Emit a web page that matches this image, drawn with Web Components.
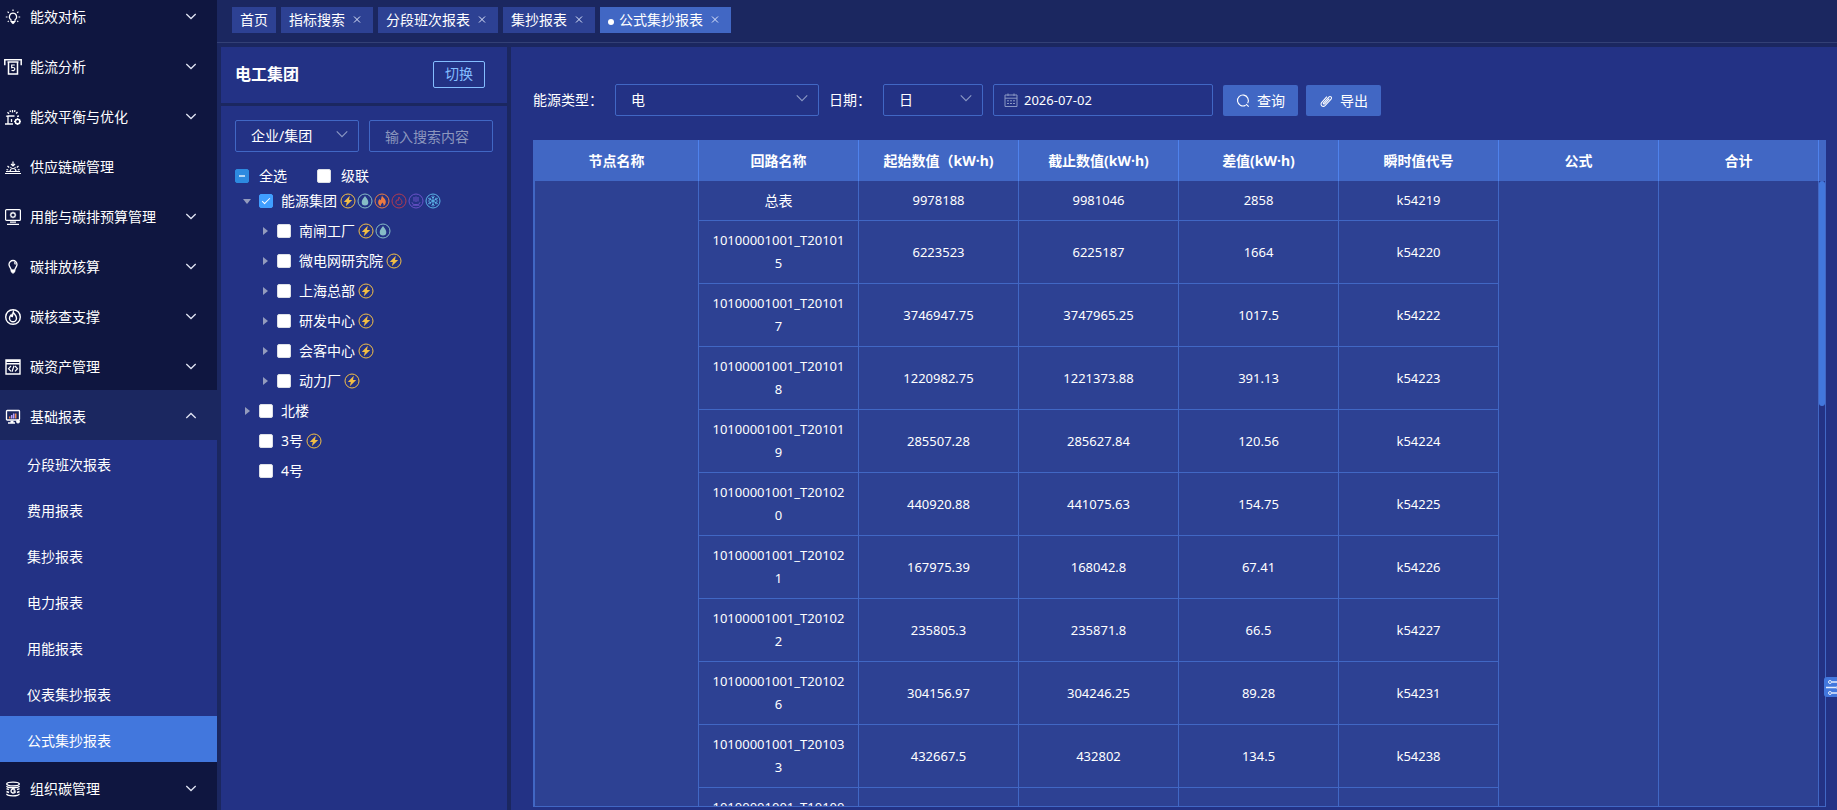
<!DOCTYPE html>
<html lang="zh-CN">
<head>
<meta charset="utf-8">
<title>公式集抄报表</title>
<style>
:root {
  --bg: #1b2760; --nav: #0f1640; --panel: #233285; --cell: #2d4193;
  --head: #4167c4; --active: #4277dd; --line: #4167c4; --headline: #4f82ec;
}
html, body { margin: 0; height: 100%; overflow: hidden; background: var(--bg); color: #fff;
  font: 14px/20px "Noto Sans", "Noto Sans CJK SC", sans-serif; }
</style>
</head>
<body>
<app-shell></app-shell>
<script>
const define = (name, html, setup) => customElements.define(name, class extends HTMLElement {
  connectedCallback() {
    if (this.shadowRoot) return;
    const t = document.createElement('template');
    t.innerHTML = typeof html === 'function' ? html(this) : html;
    this.attachShadow({ mode: 'open' }).append(t.content.cloneNode(true));
    if (setup) setup(this, this.shadowRoot);
  }
});

/* ---------- icons ---------- */
const bolt = '<path d="M9.800 2.800 3.800 8.900h3L5.800 13.200l6.400-6.300H9z" fill="currentColor" stroke="none"/>';
const ring = '<circle cx="8" cy="8" r="7"/>';
const icons = {
  idea: '<path d="M8 4.200a3.600 3.600 0 0 0-2 6.600v1.700h4v-1.700a3.600 3.600 0 0 0-2-6.600zM8 .5v1.500M2.600 2.700l1.200 1.200M13.400 2.700l-1.200 1.200M.8 8h1.700M13.500 8h1.700M2.800 12.800l.9-.9M13.200 12.800l-.9-.9" stroke-width="1.200"/><path d="M6.200 12h3.600v1.700L8 15.300l-1.800-1.600z" fill="currentColor" stroke="none"/>',
  flow: '<path d="M1.500 5.500H.8V.8h16.400v4.700h-.7M3.500 3h11M4.500 3v12h9V3" stroke-width="1.500"/><path d="M10.800 6H7.700v2.700c2.800-.6 3.300.5 3 1.700-.3 1.300-1.900 1.500-3.200.8" stroke-width="1.200"/>',
  balance: '<path d="M0 15h8M3 15V7h6.500M6.500 10v3M1 7l1.700.5M2.500 3.200 4 4.700M7.500 1v2.500M12.500 3l-1.400 1.500M14 7l-2 .3M5 1.500l.5 1.500M10 1.200 9.500 3" stroke-width="1.300"/><circle cx="12.600" cy="12.500" r="2.300" stroke-width="1.600"/><path d="M12.600 8.900v1M12.600 15v1M9 12.500h1M15.200 12.500h1M10 10l.7.7M15.200 10l-.7.7M10 15l.7-.7M15.200 15l-.7-.7"/>',
  supply: '<path d="M0 14.500h16M1 12.500h14M5 12.500a3 3 0 0 1 6 0M8 2.500v4M6 5l2 2 2-2M2.500 7l1.700 1.500M13.500 7l-1.700 1.500M1.500 10.500l1.700.5M14.500 10.500l-1.700.5M5.500 8l.8 1M10.500 8l-.8 1" stroke-width="1.200"/>',
  budget: '<rect x=".6" y=".6" width="14.800" height="10.800" rx="1" stroke-width="1.200"/><circle cx="8" cy="6" r="2.200" stroke-width="1.200"/><path d="M8 2.700v1M8 8.300v1M4.800 6h1M10.200 6h1M5.700 3.700l.7.7M10.300 3.700l-.7.7M5.700 8.300l.7-.7M10.300 8.300l-.7-.7M5 13.200h6M2 15.400h12" stroke-width="1.200"/>',
  bulb: '<path d="M8 1.500a4 4 0 0 0-4 4c0 2 1.800 3.300 2.400 6h3.200C10.200 8.800 12 7.500 12 5.500a4 4 0 0 0-4-4zM9 3.700c1 .2 1.300 1 1.300 1.800" stroke-width="1.300"/><path d="M6.300 11h3.400v2L8 14.300 6.300 13z" fill="currentColor"/>',
  flame: '<circle cx="8" cy="8" r="7.300" stroke-width="1.400"/><path d="M8.300 3c.3 2 3.500 3.300 3.200 6.300a3.500 3.500 0 0 1-7 0c0-1.500.8-2.300 1.600-3.300.2 1 .6 1.400 1.200 1.500C7.800 6 7.700 4.500 8.300 3z" stroke-width="1.400"/>',
  asset: '<path d="M1 1h14v14H1zM1 2.200h14M1 4.800h14" stroke-width="1.400"/><path d="M6 7 3.500 9.700 6 12.400M10 7l2.500 2.700L10 12.400M9 6.800l-2 6" stroke-width="1.200"/>',
  report: '<rect x="1.500" y="1.500" width="13" height="9.500" rx=".8" stroke-width="1.300"/><path d="M3 14h7M5.500 12.500h3" stroke-width="1.500"/><path d="M4.700 9.500v-2M10.700 9.500v-5" stroke="#f58a4b" stroke-width="1.500"/><path d="M6.700 9.500V6M8.700 9.500V4.500" stroke="#b9a4ff" stroke-width="1.500"/><circle cx="13" cy="12.500" r="1.500" fill="currentColor"/>',
  org: '<ellipse cx="8" cy="3" rx="6.300" ry="1.900" stroke-width="1.400"/><path d="M1.700 5c0 2.400 12.600 2.400 12.600 0M1.500 7.700l2.500 1M14.500 7.700l-2.500 1M1.500 10.500l2.500 1M14.500 10.500l-2.500 1M1.700 12.800c0 2.700 12.600 2.700 12.600 0M10 8.500c-1.800-1-4-.3-4 1.600s2.200 2.500 4 1.400V10H8.500" stroke-width="1.400"/>',
  electric: ring + bolt,
  water: ring + '<path d="M8 3c1.800 2.600 3.300 4.200 3.300 6.300a3.300 3.300 0 0 1-6.600 0C4.700 7.200 6.200 5.600 8 3z" fill="currentColor" stroke="none"/>',
  gas: ring + '<path d="M8.200 2.600c.2 2 3.800 3.400 3.600 6.400-.1 2-1 3.200-2.300 4 .5-1.800-.2-2.700-1.200-3.600-.6 1.300-1.800 2-1.500 3.800C5 12.400 4 11 4.200 9c.1-1.300.7-2.300 1.500-3 .2.700.5 1 .9 1.200C7.500 5.800 7.300 4 8.200 2.600z" fill="currentColor" stroke="none"/>',
  heat: ring + '<path d="M8 4c.2 1.700 3.200 2.600 3 5.200-.2 3.500-6 3.500-6.100 0 0-1.300.6-1.900 1.300-2.500l.8 1C7.700 6.600 7.500 5 8 4z"/>',
  steam: ring + '<path d="M4 9.300c0 3.200 8 3.200 8 0M4.500 12.200h7M6 4v4.500M8 3.500V9M10 4v4.500"/>',
  cold: ring + '<path d="M8 2.500v11M3.200 5.200l9.600 5.600M3.200 10.800l9.600-5.600M6.500 3.500 8 5l1.500-1.500M6.500 12.500 8 11l1.500 1.500M3.500 7.300l2-.6-.5-2M12.500 7.300l-2-.6.5-2M3.500 8.700l2 .6-.5 2M12.500 8.700l-2 .6.5 2"/>',
  down: '<path d="m3.300 6 4.700 4.500L12.700 6" stroke-width="1.300"/>',
  up: '<path d="m3.300 10 4.700-4.500 4.700 4.500" stroke-width="1.300"/>',
  arrow: '<path d="m2 5 6 6 6-6" stroke-width="1.300"/>',
  close: '<path d="m5 4.500 6 6M11 4.500l-6 6"/>',
  calendar: '<path d="M2 3h12v11.500H2zM2 6.200h12M5 1.500V4M11 1.500V4M4 8.800h2M7 8.800h2M10 8.800h2M4 11.500h2M7 11.500h2M10 11.500h2"/>',
  search: '<path d="M11 12.800A6.200 6.200 0 1 1 13.300 10.500M11.500 11.500l3 3" stroke-width="1.300"/>',
  clip: '<path d="m11.800 5.200-5.400 6c-.8.9-2-.2-1.200-1.100l6-6.600c1.700-1.700 4.200.5 2.600 2.300l-6.600 7.200c-2.900 2.800-6.600-.4-4-3.400L9 3" stroke-width="1.200"/>',
  sliders: '<path d="M6 4h13M0 9.500h10M14 9.500h5M6 15h13" stroke-width="1.500"/><circle cx="4" cy="4" r="1.500"/><circle cx="12" cy="9.500" r="1.500"/><circle cx="4" cy="15" r="1.500"/>'
};
define('ui-icon', el => {
  const n = el.getAttribute('name');
  const box = n === 'flow' ? '0 0 18 16' : n === 'sliders' ? '0 0 19 19' : '0 0 16 16';
  return `<style>:host{display:block;flex:none;width:16px;height:16px}svg{display:block;width:100%;height:100%;fill:none;stroke:currentColor}</style>
  <svg viewBox="${box}" aria-hidden="true">${icons[n]}</svg>`;
});

/* ---------- side navigation ---------- */
define('nav-item', el => `<style>
  :host{display:block}
  a{display:flex;align-items:center;box-sizing:border-box;height:50px;padding:3px 18px 0 4px;color:#fff;text-decoration:none;background:var(--nav)}
  :host([open]) a{background:var(--bg)}
  .i{width:18px;display:flex;justify-content:center;margin-right:8px}
  .t{flex:1}
  .c{margin-bottom:1px;color:#dfe3f2}
</style><a href="#"><span class="i"><ui-icon name="${el.getAttribute('icon')}"${el.getAttribute('icon') === 'flow' ? ' style="width:18px"' : ''}></ui-icon></span><span class="t"><slot></slot></span>
${el.hasAttribute('leaf') ? '' : `<ui-icon class="c" name="${el.hasAttribute('open') ? 'up' : 'down'}"></ui-icon>`}</a>`);
define('nav-sub', `<style>
  :host{display:block}
  a{display:flex;align-items:center;box-sizing:border-box;height:46px;padding:4px 0 0 27px;color:#fff;text-decoration:none;background:var(--panel)}
  :host([current]) a{background:var(--active)}
</style><a href="#"><slot></slot></a>`);
define('side-nav', `<style>
  :host{display:block;overflow:hidden;background:var(--nav)}
  nav{margin-top:-10px}
</style><nav>
<nav-item icon="idea">能效对标</nav-item><nav-item icon="flow">能流分析</nav-item>
<nav-item icon="balance">能效平衡与优化</nav-item><nav-item icon="supply" leaf>供应链碳管理</nav-item>
<nav-item icon="budget">用能与碳排预算管理</nav-item><nav-item icon="bulb">碳排放核算</nav-item>
<nav-item icon="flame">碳核查支撑</nav-item><nav-item icon="asset">碳资产管理</nav-item>
<nav-item icon="report" open>基础报表</nav-item>
<nav-sub>分段班次报表</nav-sub><nav-sub>费用报表</nav-sub><nav-sub>集抄报表</nav-sub><nav-sub>电力报表</nav-sub>
<nav-sub>用能报表</nav-sub><nav-sub>仪表集抄报表</nav-sub><nav-sub current>公式集抄报表</nav-sub>
<nav-item icon="org">组织碳管理</nav-item></nav>`);

/* ---------- page tabs ---------- */
define('page-tab', el => `<style>
  :host{display:flex;align-items:center;height:26px;padding:0 8px;background:var(--cell)}
  :host([current]){background:var(--head)}
  :host([current])::before{content:"";width:6px;height:6px;border-radius:50%;background:#fff;margin:4px 5px 0 0}
  a{color:#fff;text-decoration:none}
  button{all:unset;margin-left:4px;color:#dfe6fb;cursor:pointer}
</style><a href="#"><slot></slot></a>${el.hasAttribute('closable') ? '<button aria-label="关闭"><ui-icon name="close"></ui-icon></button>' : ''}`);
define('tab-bar', `<style>
  :host{display:flex;gap:5px;padding:7px 15px 9px;border-bottom:1px solid #334076}
</style><page-tab>首页</page-tab><page-tab closable>指标搜索</page-tab><page-tab closable>分段班次报表</page-tab>
<page-tab closable>集抄报表</page-tab><page-tab closable current>公式集抄报表</page-tab>`);

/* ---------- form controls ---------- */
define('select-box', el => `<style>
  :host{display:block;position:relative}
  select{appearance:none;box-sizing:border-box;width:100%;height:32px;margin:0;padding:0 30px 0 15px;border:1px solid var(--line);border-radius:2px;background:transparent;color:#fff;font:inherit;display:block}
  option{background:var(--panel)}
  ui-icon{position:absolute;right:10px;top:7px;width:14px;height:14px;color:#8b98c4;pointer-events:none}
</style><select aria-label="${el.getAttribute('label')}"><option>${el.getAttribute('value')}</option></select><ui-icon name="arrow"></ui-icon>`);
define('check-box', el => `<style>
  :host{display:block}
  label{display:flex;align-items:center;gap:var(--gap,8px)}
  input{appearance:none;flex:none;width:14px;height:14px;margin:0;border:1px solid #dcdfe6;border-radius:2px;background:#fff;display:grid;place-items:center}
  input:checked{background:#409eff;border-color:#409eff}
  input:checked::after{content:"";width:3px;height:7px;border:solid #fff;border-width:0 1px 1px 0;transform:rotate(45deg);margin-top:-2px}
  input:indeterminate{background:#2d8ae0;border-color:#2d8ae0}
  input:indeterminate::after{content:"";width:6px;height:2px;background:#b4d6f6}
</style><label><input type="checkbox"${el.hasAttribute('checked') ? ' checked' : ''}><span><slot></slot></span></label>`,
(el, root) => { if (el.hasAttribute('mixed')) root.querySelector('input').indeterminate = true; });
define('action-button', el => `<style>
  :host{display:block}
  button{display:flex;align-items:center;gap:7px;height:31px;padding:0 13px;border:0;border-radius:2px;background:var(--head);color:#fff;font:inherit}
  ui-icon{width:14px;height:14px}
</style><button><ui-icon name="${el.getAttribute('icon')}"></ui-icon><slot></slot></button>`);

/* ---------- organisation tree ---------- */
const tones = { electric: '#f2bd45', water: '#86bdc6', gas: '#ec7a41', heat: '#b23a50', steam: '#6a52c8', cold: '#5bb2e6' };
define('tree-node', el => `<style>
  :host{display:block}
  .row{display:flex;align-items:center;height:30px}
  .arrow{width:24px;display:flex;justify-content:center}
  .arrow i{border:4px solid transparent;border-left:5px solid #939bbd;border-right:0}
  .arrow.open i{border:4px solid transparent;border-top:5px solid #939bbd;border-bottom:0}
  .icons{display:flex;gap:1px;margin-left:3px}
  .kids{padding-left:18px}
</style><div class="row"><span class="arrow ${el.getAttribute('state') || ''}">${el.hasAttribute('state') ? '<i></i>' : ''}</span>
<check-box${el.hasAttribute('checked') ? ' checked' : ''}>${el.getAttribute('name')}</check-box>
<span class="icons">${(el.getAttribute('energy') || '').split(' ').filter(Boolean).map(k => `<ui-icon name="${k}" style="color:${tones[k]}"></ui-icon>`).join('')}</span></div>
<div class="kids"><slot></slot></div>`);
define('org-panel', `<style>
  :host{display:flex;flex-direction:column;gap:3px}
  header{display:flex;align-items:center;justify-content:space-between;box-sizing:border-box;height:56px;padding:0 22px 2px 14px;background:var(--panel)}
  h2{margin:0;font-size:16px;line-height:24px}
  button{height:27px;width:52px;padding:0;border:1px solid #84bdff;border-radius:2px;background:transparent;color:#84bdff;font:inherit;line-height:20px}
  section{flex:1;padding:14px;background:var(--panel)}
  .search{display:grid;grid-template-columns:1fr 1fr;gap:10px}
  input{box-sizing:border-box;width:100%;min-width:0;height:32px;padding:0 15px;border:1px solid var(--line);border-radius:2px;background:transparent;color:#fff;font:inherit}
  input::placeholder{color:#8c97be;opacity:1}
  .all{display:flex;gap:30px;height:20px;margin-top:14px;--gap:10px}
</style>
<header><h2>电工集团</h2><button>切换</button></header>
<section>
<div class="search"><select-box label="范围" value="企业/集团"></select-box><input aria-label="搜索" placeholder="输入搜索内容"></div>
<div class="all"><check-box mixed>全选</check-box><check-box>级联</check-box></div>
<tree-node name="能源集团" state="open" checked energy="electric water gas heat steam cold">
<tree-node name="南闸工厂" state="shut" energy="electric water"></tree-node>
<tree-node name="微电网研究院" state="shut" energy="electric"></tree-node>
<tree-node name="上海总部" state="shut" energy="electric"></tree-node>
<tree-node name="研发中心" state="shut" energy="electric"></tree-node>
<tree-node name="会客中心" state="shut" energy="electric"></tree-node>
<tree-node name="动力厂" state="shut" energy="electric"></tree-node></tree-node>
<tree-node name="北楼" state="shut"></tree-node><tree-node name="3号" energy="electric"></tree-node><tree-node name="4号"></tree-node>
</section>`);

/* ---------- report ---------- */
define('filter-bar', `<style>
  :host{display:flex;align-items:flex-end}
  .l{line-height:32px;white-space:nowrap}
  .type{width:204px;margin:0 10px 0 12px}
  .unit{width:100px;margin:0 10px 0 12px}
  .date{position:relative;width:220px;margin-right:10px}
  .date ui-icon{position:absolute;left:10px;top:8px;color:#8b98c4}
  input{box-sizing:border-box;width:100%;height:32px;padding:0 10px 0 30px;border:1px solid var(--line);border-radius:2px;background:transparent;color:#fff;font:inherit;font-size:13px;display:block}
  action-button{margin-right:8px}
</style><span class="l">能源类型：</span><select-box class="type" label="能源类型" value="电"></select-box>
<span class="l">日期：</span><select-box class="unit" label="日期" value="日"></select-box>
<div class="date"><ui-icon name="calendar"></ui-icon><input aria-label="选择日期" value="2026-07-02"></div>
<action-button icon="search">查询</action-button><action-button icon="clip">导出</action-button>`);

const rows = [
  ['总表', '9978188', '9981046', '2858', 'k54219'],
  ['10100001001_T201015', '6223523', '6225187', '1664', 'k54220'],
  ['10100001001_T201017', '3746947.75', '3747965.25', '1017.5', 'k54222'],
  ['10100001001_T201018', '1220982.75', '1221373.88', '391.13', 'k54223'],
  ['10100001001_T201019', '285507.28', '285627.84', '120.56', 'k54224'],
  ['10100001001_T201020', '440920.88', '441075.63', '154.75', 'k54225'],
  ['10100001001_T201021', '167975.39', '168042.8', '67.41', 'k54226'],
  ['10100001001_T201022', '235805.3', '235871.8', '66.5', 'k54227'],
  ['10100001001_T201026', '304156.97', '304246.25', '89.28', 'k54231'],
  ['10100001001_T201033', '432667.5', '432802', '134.5', 'k54238'],
  ['10100001001_T101001', '', '', '', '']
];
const heads = ['节点名称', '回路名称', '起始数值（kW·h)', '截止数值(kW·h)', '差值(kW·h)', '瞬时值代号', '公式', '合计'];
define('report-table', () => `<style>
  :host{display:grid;grid-template-columns:1fr 6px;min-height:0;border:1px solid var(--line);border-top:0}
  .scroll{overflow:auto;scrollbar-width:none;min-height:0;border-left:1px solid var(--line)}
  table{width:100%;table-layout:fixed;border-collapse:separate;border-spacing:0}
  th,td{box-sizing:border-box;border-right:1px solid var(--line);text-align:center;line-height:23px}
  th{position:sticky;top:0;height:41px;padding:0;background:var(--head);border-color:var(--headline);font-weight:700;white-space:nowrap}
  td{padding:8px 12px;background:var(--cell);border-bottom:1px solid var(--line);font-size:13px;word-break:break-all}
  td.zh{font-size:14px}
  .first{width:164px} .rest{width:160px}
  .bar{display:grid;grid-template-rows:41px 36fr 64fr;background:var(--panel)}
  .cap{background:var(--head)}
  .thumb{background:var(--active);border-radius:3px}
</style><div class="scroll"><table>
<colgroup><col class="first">${'<col class="rest">'.repeat(7)}</colgroup>
<thead><tr>${heads.map(h => `<th scope="col">${h}</th>`).join('')}</tr></thead>
<tbody>${rows.map((r, i) => `<tr>${i ? '' : `<td rowspan="${rows.length}"></td>`}${r.map((c, k) => `<td${!i && !k ? ' class="zh"' : ''}>${c}</td>`).join('')}${i ? '' : `<td rowspan="${rows.length}"></td>`.repeat(2)}</tr>`).join('')}</tbody>
</table></div><div class="bar"><div class="cap"></div><div class="thumb"></div></div>`);

/* ---------- shell ---------- */
define('app-shell', `<style>
  :host{display:grid;grid-template-columns:217px 1fr;height:100vh;position:relative}
  main{display:grid;grid-template-rows:auto 1fr;min-width:0;min-height:0}
  .body{display:grid;grid-template-columns:286px 1fr;gap:4px;padding:4px 0 0 4px;min-height:0}
  .report{display:grid;grid-template-rows:auto 1fr;gap:24px;padding:37px 11px 3px 22px;background:var(--panel);min-width:0;min-height:0}
  side-nav,org-panel{min-height:0}
  .drawer{position:absolute;right:0;bottom:113px;width:13px;height:20px;padding:0;border:0;border-radius:3px 0 0 3px;background:var(--active);color:#e4ecfc;overflow:hidden}
  .drawer ui-icon{width:19px;height:19px;margin-left:2px}
</style><side-nav></side-nav>
<main><tab-bar></tab-bar><div class="body"><org-panel></org-panel>
<div class="report"><filter-bar></filter-bar><report-table></report-table></div></div></main>
<button class="drawer" aria-label="设置"><ui-icon name="sliders"></ui-icon></button>`);
</script>
</body>
</html>
